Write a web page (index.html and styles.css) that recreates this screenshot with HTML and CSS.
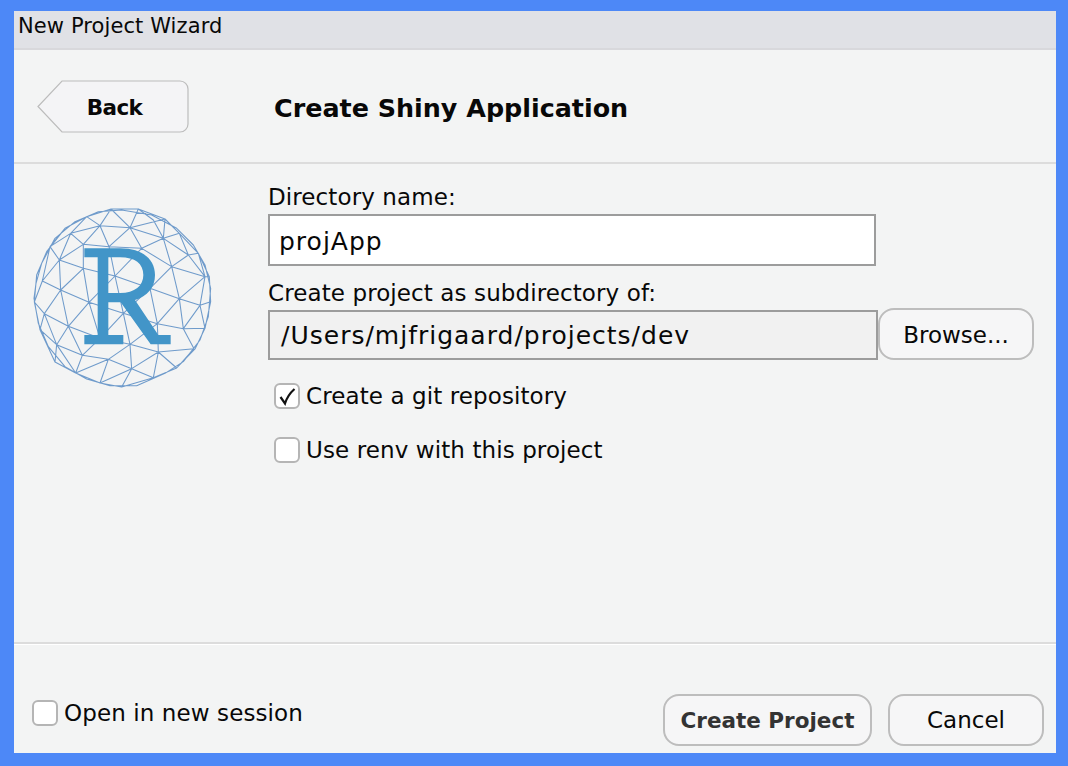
FILE: index.html
```html
<!DOCTYPE html>
<html lang="en">
<head>
    <meta charset="UTF-8">
    <title>New Project Wizard</title>
    <link rel="stylesheet" href="styles.css">
</head>
<body>
    <div class="wizard">
        <div class="title-bar">New Project Wizard</div>
        <div class="header">
            <button class="back">
                <svg class="back-shape" width="152" height="53" viewBox="0 0 152 53">
                    <path d="M25 1H143a8 8 0 0 1 8 8V44a8 8 0 0 1-8 8H25L1 26.5Z" fill="#f4f4f6" stroke="#bcbcbc" stroke-width="1.2"/>
                </svg>
                <span class="back-label">Back</span>
            </button>
            <h1 class="page-title">Create Shiny Application</h1>
        </div>
        <div class="main">
            <div class="logo-col">
                <svg width="200" height="200" viewBox="0 0 600 600">
                    <path class="mesh" d="M273 42L355 42L435 72L478 115L535 175L568 245L572 320L555 400L525 462L470 519L400 548L305 576L240 564L167 534L105 501L60 404L43 321L50 240L80 170L135 100L200 65Z
                        M305 45L395 60L470 100L520 150L555 210L572 280L565 365L540 435L490 500L435 535L350 572L270 572L200 552L135 515L85 455L55 385L42 310L48 265L65 205L105 130L165 80L235 50Z
                        M273 42L240 92M200 65L240 92M200 65L152 115M152 115L240 92M152 115L90 155M135 100L90 155M152 115L190 148M240 92L190 148M152 115L118 195M90 155L118 195M118 195L190 148M240 92L267 155M190 148L267 155M118 195L190 220M118 195L67 258M90 155L67 258M67 258L122 285M118 195L122 285M122 285L190 220M67 258L43 321M190 148L190 220M122 285L73 356M43 321L73 356M122 285L145 394M122 285L207 322M190 220L207 322
                        M190 220L285 243M285 243L390 280M267 155L285 243M267 155L330 98M267 155L365 160M330 98L365 160M430 130L365 160M365 160L455 215M365 160L285 243M207 322L285 243M207 322L310 355M285 243L310 355M310 355L390 280M310 355L412 386M207 322L145 394M207 322L240 430M145 394L240 430M240 430L310 355M240 430L330 448M310 355L330 448M330 448L412 386M240 430L187 481
                        M273 42L330 98M355 42L330 98M240 92L330 98M330 98L435 72M355 42L400 75L430 130M330 98L430 130M435 72L430 130M430 130L478 115M430 130L505 180M478 115L505 180M505 180L535 175M430 130L455 215M505 180L455 215M455 215L555 245M505 180L555 245M555 245L535 175M555 245L568 245M455 215L390 280M455 215L478 311M390 280L478 311M555 245L478 311M555 245L540 331M478 311L540 331M390 280L412 386M412 386L478 311
                        M412 386L490 401M490 401L540 331M490 401L522 461M490 401L478 311M412 386L415 471M415 471L522 461M415 471L330 448M415 471L470 519M522 461L470 519M415 471L400 548M330 448L335 521M335 521L415 471M335 521L400 548M335 521L305 576M335 521L265 493M540 331L572 320M540 331L555 400M490 401L555 400
                        M73 356L145 394M73 356L110 449M145 394L110 449M145 394L187 481M110 449L187 481M187 481L265 493M187 481L167 534M110 449L167 534M265 493L240 564M167 534L240 564M167 534L265 493M73 356L60 404L110 449M110 449L105 501M265 493L330 448M240 564L305 576M240 564L335 521"/>
                    <path class="r-mark" fill-rule="evenodd" d="M193 160H300C370 160 405 195 405 240C405 278 382 304 345 315L415 420H452V448H392L302 322H265V420H310V448H193V420H233V187H193ZM265 187V294H300C345 294 370 272 370 240C370 206 345 187 300 187Z"/>
                </svg>
            </div>
            <div class="form">
                <label class="field-label">Directory name:</label>
                <div class="text-input">projApp</div>
                <label class="field-label second">Create project as subdirectory of:</label>
                <div class="dir-row">
                    <div class="text-input readonly">/Users/mjfrigaard/projects/dev</div>
                    <button class="btn browse">Browse...</button>
                </div>
                <div class="check-row first">
                    <span class="box">
                        <svg width="20" height="20" viewBox="0 0 20 20"><path d="M3.5 11L8 17.5C10 11 13 7 17.5 3" fill="none" stroke="#111" stroke-width="2.2"/></svg>
                    </span>
                    Create a git repository
                </div>
                <div class="check-row"><span class="box"></span>Use renv with this project</div>
            </div>
        </div>
        <div class="footer">
            <div class="check-row"><span class="box"></span>Open in new session</div>
            <div class="footer-buttons">
                <button class="btn create">Create Project</button>
                <button class="btn cancel">Cancel</button>
            </div>
        </div>
    </div>
</body>
</html>
```

FILE: styles.css
```css
* {
    box-sizing: border-box;
}

body {
    margin: 0;
    height: 766px;
    padding: 11px 12px 13px 14px;
    background-color: #4d88f7;
    font-family: 'DejaVu Sans', sans-serif;
    font-size: 23px;
    letter-spacing: 0.1px;
    color: #080808;
    overflow: hidden;
}

.wizard {
    height: 742px;
    display: flex;
    flex-direction: column;
    background-color: #f3f4f4;
}

.title-bar {
    height: 39px;
    padding: 3px 0 0 4px;
    background-color: #e0e1e6;
    border-bottom: 2px solid #d8d8dc;
    font-size: 21px;
}

.header {
    height: 114px;
    display: flex;
    align-items: center;
    padding-left: 23px;
    border-bottom: 2px solid #dcdcdc;
}

.back {
    position: relative;
    width: 152px;
    height: 53px;
    padding: 3px 0 0 3px;
    border: none;
    background: none;
    font: inherit;
    font-size: 21.5px;
    font-weight: bold;
    letter-spacing: -0.6px;
    color: #080808;
}

.back-shape {
    position: absolute;
    left: 0;
    top: 0;
}

.back-label {
    position: relative;
}

.page-title {
    margin: 3px 0 0 85px;
    font-size: 25.4px;
    letter-spacing: 0;
}

.main {
    height: 480px;
    display: flex;
    border-bottom: 2px solid #dcdcdc;
}

.logo-col {
    width: 254px;
    padding: 31px 0 0 6px;
}

.mesh {
    fill: none;
    stroke: #6f9bcb;
    stroke-width: 3.2;
    stroke-linejoin: round;
}

.r-mark {
    fill: #4295c8;
}

.form {
    flex: 1;
    padding-top: 20px;
}

.field-label {
    display: block;
    height: 30px;
}

.field-label.second {
    margin-top: 12px;
    padding-top: 2px;
}

.text-input {
    width: 608px;
    height: 52px;
    padding: 11px 9px 0;
    border: 2px solid #9c9c9c;
    background-color: #fff;
    font-size: 25px;
    letter-spacing: 1px;
}

.text-input.readonly {
    width: 610px;
    height: 50px;
    padding: 9px 11px 0;
    background-color: #f1f1f1;
}

.dir-row {
    display: flex;
    align-items: flex-end;
}

.btn {
    height: 52px;
    border: 2px solid #bdbdbd;
    border-radius: 16px;
    background-color: #f6f6f7;
    font: inherit;
    color: #080808;
}

.browse {
    width: 156px;
    padding-top: 3px;
}

.check-row {
    display: flex;
    align-items: center;
    gap: 6px;
    margin-left: 6px;
    margin-top: 26px;
    height: 28px;
}

.check-row.first {
    margin-top: 22px;
}

.box {
    width: 26px;
    height: 26px;
    display: flex;
    align-items: center;
    justify-content: center;
    border: 2px solid #b5b5b5;
    border-radius: 6px;
    background-color: #fff;
}

.footer {
    flex: 1;
    display: flex;
    justify-content: space-between;
    align-items: flex-end;
    padding: 0 12px 7px 18px;
    border-top: 1px solid #fff;
}

.footer .check-row {
    margin: 0 0 19px;
}

.footer-buttons {
    display: flex;
    gap: 16px;
}

.create {
    width: 209px;
    font-size: 21.5px;
    font-weight: bold;
    letter-spacing: 0;
    color: #333;
}

.cancel {
    width: 156px;
}
```
